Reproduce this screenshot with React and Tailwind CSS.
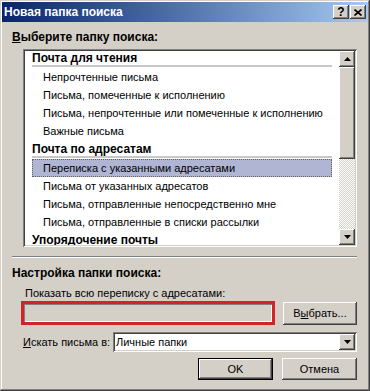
import React from "react";

const raised =
  "bg-[#d4d0c8] shadow-[inset_-1px_-1px_#404040,inset_1px_1px_#ffffff,inset_-2px_-2px_#808080,inset_2px_2px_#d4d0c8]";
const sunken =
  "shadow-[inset_1px_1px_#808080,inset_-1px_-1px_#ffffff,inset_2px_2px_#404040,inset_-2px_-2px_#d4d0c8]";

function Up() {
  return (
    <svg width="7" height="4" viewBox="0 0 7 4">
      <polygon points="3.5,0 7,4 0,4" fill="#000" />
    </svg>
  );
}
function Down() {
  return (
    <svg width="7" height="4" viewBox="0 0 7 4">
      <polygon points="0,0 7,0 3.5,4" fill="#000" />
    </svg>
  );
}

function Header({ children }) {
  return (
    <div className="h-[19px] flex flex-col">
      <div className="h-[16px] leading-[18px] font-bold text-[12px] whitespace-nowrap">{children}</div>
      <div className="h-[2px] bg-[#c8c8c8]" />
    </div>
  );
}
function Item({ children, selected }) {
  return (
    <div
      className={
        "h-[18px] leading-[18px] pl-[11px] whitespace-nowrap " +
        (selected ? "bg-[#b0b5d4] outline-1 outline-dotted outline-[#606060] -outline-offset-1" : "")
      }
    >
      {children}
    </div>
  );
}

export default function App() {
  return (
    <div
      className="w-[370px] h-[391px] bg-[#d4d0c8] p-[2px] flex flex-col text-[11px] text-black shadow-[inset_-1px_-1px_#404040,inset_1px_1px_#d4d0c8,inset_-2px_-2px_#808080,inset_2px_2px_#ffffff] overflow-hidden"
      style={{ fontFamily: '"Liberation Sans", Arial, sans-serif' }}
    >
      {/* Title bar */}
      <div className="h-[20px] bg-linear-to-r from-[#0a246a] to-[#a6caf0] flex items-center pl-[2px] pr-[2px]">
        <div className="text-white font-bold text-[12px] flex-1 whitespace-nowrap">Новая папка поиска</div>
        <div className="flex gap-[1px] mr-[0px]">
          <div className={raised + " w-[16px] h-[14px] flex items-center justify-center font-bold text-[12px] leading-none"}>?</div>
          <div className={raised + " w-[16px] h-[14px] flex items-center justify-center"}>
            <svg width="8" height="7" viewBox="0 0 8 7">
              <path d="M0.5 0.5 L7.5 6.5 M7.5 0.5 L0.5 6.5" stroke="#000" strokeWidth="1.6" />
            </svg>
          </div>
        </div>
      </div>

      <div className="flex flex-col pl-[10px] pr-[11px]">
        <div className="mt-[8px] h-[14px] leading-[14px] font-bold text-[12px]">
          <span className="underline">В</span>ыберите папку поиска:
        </div>

        {/* List box */}
        <div className={"mt-[5px] ml-[11px] h-[198px] bg-white p-[2px] flex " + sunken}>
          <div className="flex-1 overflow-hidden">
            <div className="-mt-[2px] mx-[7px]">
              <Header>Почта для чтения</Header>
              <Item>Непрочтенные письма</Item>
              <Item>Письма, помеченные к исполнению</Item>
              <Item>Письма, непрочтенные или помеченные к исполнению</Item>
              <Item>Важные письма</Item>
              <Header>Почта по адресатам</Header>
              <Item selected>Переписка с указанными адресатами</Item>
              <Item>Письма от указанных адресатов</Item>
              <Item>Письма, отправленные непосредственно мне</Item>
              <Item>Письма, отправленные в списки рассылки</Item>
              <Header>Упорядочение почты</Header>
            </div>
          </div>
          <div className="w-[16px] flex flex-col">
            <div className={raised + " h-[16px] flex items-center justify-center"}>
              <Up />
            </div>
            <div className={raised + " h-[92px]"} />
            <div className="flex-1 bg-[repeating-conic-gradient(#d4d0c8_0_25%,#ffffff_0_50%)] bg-[length:2px_2px]" />
            <div className={raised + " h-[16px] flex items-center justify-center"}>
              <Down />
            </div>
          </div>
        </div>

        {/* Separator */}
        <div className="mt-[9px] h-[1px] bg-[#808080]" />
        <div className="h-[1px] bg-white" />

        <div className="mt-[8px] h-[14px] leading-[14px] font-bold text-[12px]">Настройка папки поиска:</div>
        <div className="mt-[6px] ml-[13px] h-[14px] leading-[14px]">Показать всю переписку с адресатами:</div>

        <div className="mt-[1px] ml-[9px] flex items-start">
          <div className="w-[254px] h-[24px] border-[3px] border-[#d2232a] p-0">
            <div className="w-full h-full bg-[#d4d0c8] shadow-[inset_1px_1px_#808080,inset_-1px_-1px_#ffffff]" />
          </div>
          <div className="flex-1" />
          <div className={raised + " w-[74px] h-[23px] mt-[1px] flex items-center justify-center"}>
            В<span className="underline">ы</span>брать...
          </div>
        </div>

        <div className="mt-[7px] ml-[11px] flex items-center">
          <div className="w-[90px] whitespace-nowrap">
            <span className="underline">И</span>скать письма в:
          </div>
          <div className={"flex-1 h-[20px] bg-white p-[2px] flex " + sunken}>
            <div className="flex-1 leading-[16px] pl-[1px]">Личные папки</div>
            <div className={raised + " w-[16px] flex items-center justify-center"}>
              <Down />
            </div>
          </div>
        </div>

        <div className="mt-[6px] flex justify-end gap-[9px]">
          <div className="w-[75px] h-[22px] border border-black">
            <div className={raised + " w-full h-full flex items-center justify-center"}>OK</div>
          </div>
          <div className={raised + " w-[75px] h-[22px] flex items-center justify-center"}>Отмена</div>
        </div>
      </div>
    </div>
  );
}
